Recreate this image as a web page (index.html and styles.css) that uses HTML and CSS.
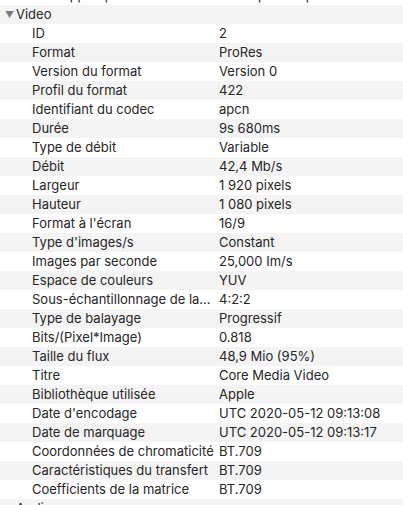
FILE: index.html
```html
<!DOCTYPE html>
<html lang="fr">
<head>
    <meta charset="UTF-8">
    <meta name="viewport" content="width=device-width, initial-scale=1.0">
    <title>Informations Vidéo</title>
    <link rel="stylesheet" href="styles.css">
</head>
<body>
    <div class="info-list">
        <div class="row"><span class="label">com.apple.quicktime.author</span><span class="value">Assur pour Repaire</span></div>

        <div class="row group"><span class="toggle">&#9660;</span>Video</div>
        <div class="row"><span class="label">ID</span><span class="value">2</span></div>
        <div class="row"><span class="label">Format</span><span class="value">ProRes</span></div>
        <div class="row"><span class="label">Version du format</span><span class="value">Version 0</span></div>
        <div class="row"><span class="label">Profil du format</span><span class="value">422</span></div>
        <div class="row"><span class="label">Identifiant du codec</span><span class="value">apcn</span></div>
        <div class="row"><span class="label">Durée</span><span class="value">9s 680ms</span></div>
        <div class="row"><span class="label">Type de débit</span><span class="value">Variable</span></div>
        <div class="row"><span class="label">Débit</span><span class="value">42,4 Mb/s</span></div>
        <div class="row"><span class="label">Largeur</span><span class="value">1 920 pixels</span></div>
        <div class="row"><span class="label">Hauteur</span><span class="value">1 080 pixels</span></div>
        <div class="row"><span class="label">Format à l'écran</span><span class="value">16/9</span></div>
        <div class="row"><span class="label">Type d'images/s</span><span class="value">Constant</span></div>
        <div class="row"><span class="label">Images par seconde</span><span class="value">25,000 Im/s</span></div>
        <div class="row"><span class="label">Espace de couleurs</span><span class="value">YUV</span></div>
        <div class="row"><span class="label">Sous-échantillonnage de la…</span><span class="value">4:2:2</span></div>
        <div class="row"><span class="label">Type de balayage</span><span class="value">Progressif</span></div>
        <div class="row"><span class="label">Bits/(Pixel*Image)</span><span class="value">0.818</span></div>
        <div class="row"><span class="label">Taille du flux</span><span class="value">48,9 Mio (95%)</span></div>
        <div class="row"><span class="label">Titre</span><span class="value">Core Media Video</span></div>
        <div class="row"><span class="label">Bibliothèque utilisée</span><span class="value">Apple</span></div>
        <div class="row"><span class="label">Date d'encodage</span><span class="value">UTC 2020-05-12 09:13:08</span></div>
        <div class="row"><span class="label">Date de marquage</span><span class="value">UTC 2020-05-12 09:13:17</span></div>
        <div class="row"><span class="label">Coordonnées de chromaticité</span><span class="value">BT.709</span></div>
        <div class="row"><span class="label">Caractéristiques du transfert</span><span class="value">BT.709</span></div>
        <div class="row"><span class="label">Coefficients de la matrice</span><span class="value">BT.709</span></div>

        <div class="row group"><span class="toggle">&#9660;</span>Audio</div>
    </div>
</body>
</html>
```

FILE: styles.css
```css
body {
    margin: 0;
    font-family: 'Inter', 'Liberation Sans', sans-serif;
    font-size: 13px;
    color: #262626;
    background-color: #ffffff;
    overflow: hidden;
}
.info-list {
    margin-top: -14px;
}
.row {
    display: grid;
    grid-template-columns: 187px 1fr;
    height: 19px;
    line-height: 19px;
    padding-left: 32px;
    white-space: nowrap;
}
.row:nth-child(even) {
    background-color: #f4f4f4;
}
.label {
    overflow: hidden;
}
.group {
    display: flex;
    padding-left: 5px;
}
.toggle {
    color: #7a7a7a;
    font-size: 9px;
    width: 11px;
}
```
